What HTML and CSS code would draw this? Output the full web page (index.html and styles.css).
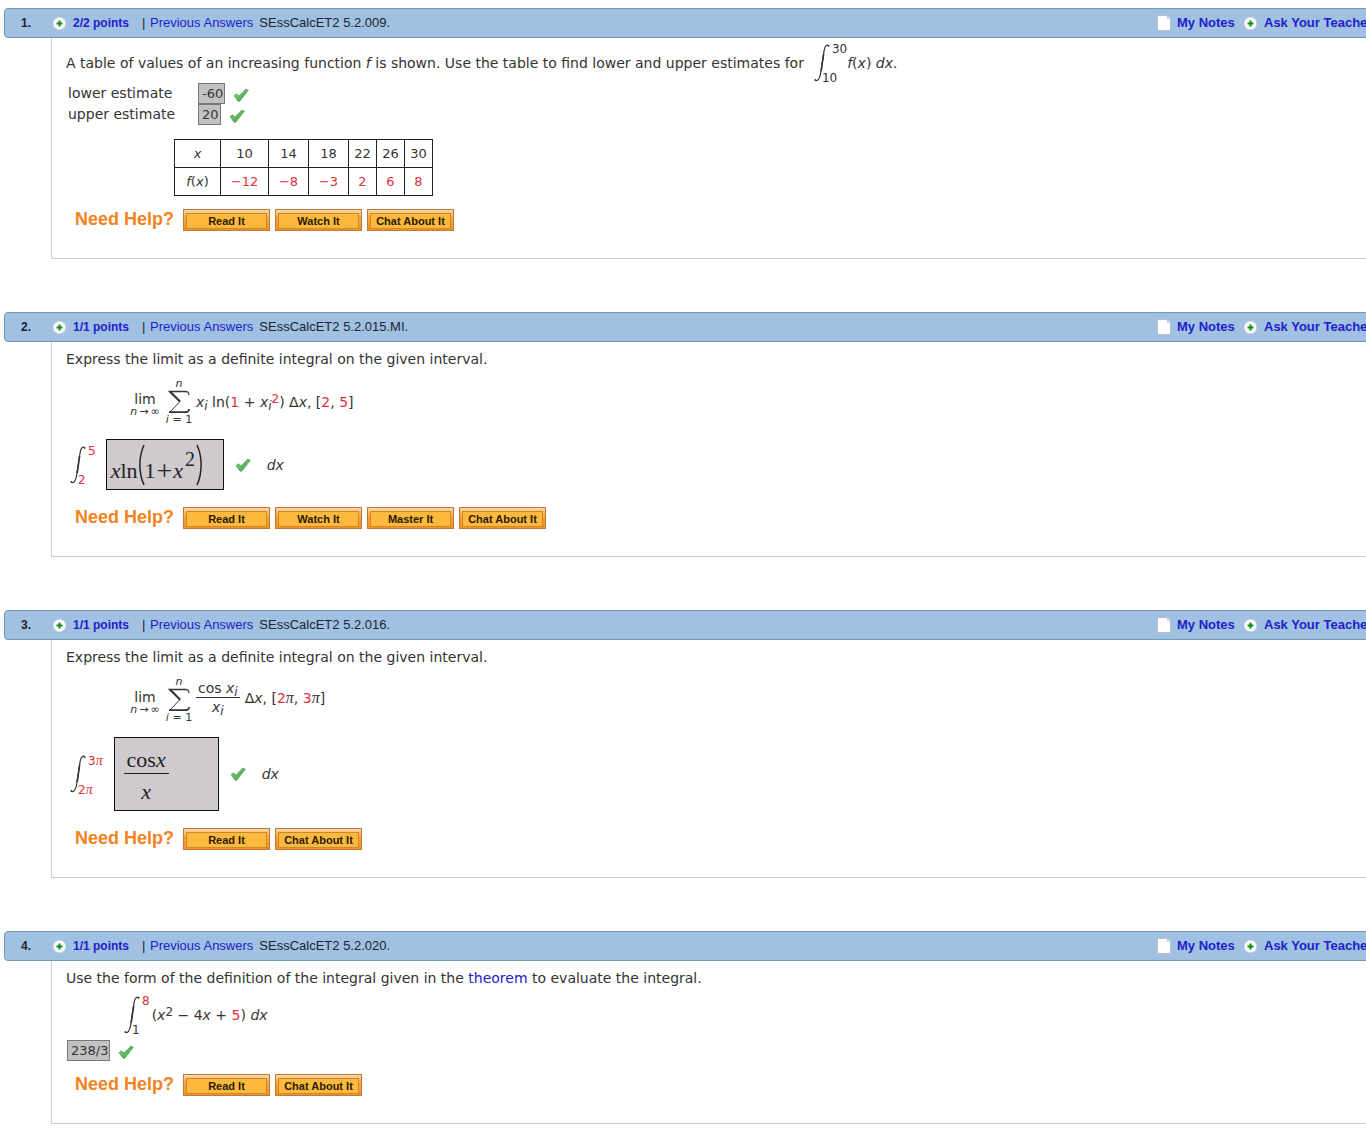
FILE: index.html
```html
<!DOCTYPE html>
<html lang="en">
<head>
<meta charset="utf-8">
<title>Assignment 5.2</title>
<link rel="stylesheet" href="styles.css">
</head>
<body>
<svg class="defs" width="0" height="0" aria-hidden="true">
  <defs>
    <linearGradient id="leaf" x1="0" y1="0" x2="1" y2="1">
      <stop offset="0" stop-color="#8fd08a"/>
      <stop offset="1" stop-color="#3f9a45"/>
    </linearGradient>
    <symbol id="tick" viewBox="0 0 16 14"><path d="M1 7.600 3.500 5.800 6 8 12.800 1 15.400 2.200 6.800 13.200 5 13.200Z" fill="url(#leaf)" stroke="#4ea552" stroke-width=".7" stroke-linejoin="round"/></symbol>
    <symbol id="plus" viewBox="0 0 13 13"><circle cx="6.500" cy="6.500" r="6.200" fill="#fdfefd" stroke="#c9d6dd" stroke-width=".6"/><path d="M6.500 3.500v6M3.500 6.500h6" stroke="#128a1c" stroke-width="2"/></symbol>
    <symbol id="note" viewBox="0 0 14 16"><path d="M.5.500h10l3 3v12H.5Z" fill="#fff" stroke="#b4bfd0"/><path d="M10.500.500v3h3" fill="#e8ebf0" stroke="#c3cad6"/></symbol>
    <symbol id="int" viewBox="0 0 16 38"><path d="M15 1.700C12.500.300 11 2 10.200 6L6.500 30C5.600 35 4 37.500 1 36.300" fill="none" stroke="#333" stroke-width="1.200"/><path d="M9.600 10 7.200 27" stroke="#333" stroke-width="1.600"/><circle cx="14.600" cy="1.900" r=".9" fill="#333"/><circle cx="1.400" cy="36" r=".9" fill="#333"/></symbol>
    <symbol id="sum" viewBox="0 0 22 24"><path d="M21 5C20.500 2 20 1.500 17 1.500H1.500L12 11.500" fill="none" stroke="#333" stroke-width="1.300"/><path d="M12 11.500 1.500 22.500" fill="none" stroke="#333" stroke-width="1"/><path d="M2 1.500 12 11.500" stroke="#333" stroke-width="2"/><path d="M1 22.200H17.500C20 22.200 20.500 21.500 21.300 19" fill="none" stroke="#333" stroke-width="1.800"/></symbol>
    <symbol id="paren" viewBox="0 0 7 42"><path d="M6 1C.5 13 .5 29 6 41" fill="none" stroke="#222" stroke-width="1.500"/></symbol>
    <symbol id="paren-close" viewBox="0 0 7 42"><path d="M1 1C6.500 13 6.500 29 1 41" fill="none" stroke="#222" stroke-width="1.500"/></symbol>
  </defs>
</svg>
<main class="page">

<section class="question">
  <header class="bar">
    <span class="number">1.</span>
    <svg class="plus"><use href="#plus"/></svg>
    <a class="points" href="#">2/2 points</a>
    <span class="divider">|</span>
    <a class="previous" href="#">Previous Answers</a>
    <span class="source">SEssCalcET2 5.2.009.</span>
    <a class="notes" href="#"><svg class="note"><use href="#note"/></svg>My Notes</a>
    <a class="ask" href="#"><svg class="plus"><use href="#plus"/></svg>Ask Your Teacher</a>
  </header>
  <div class="body">
    <div class="line">
      <p>A table of values of an increasing function <i>f</i> is shown. Use the table to find lower and upper estimates for</p>
      <span class="integral lead"><svg><use href="#int"/></svg><span class="bounds"><span>30</span><span class="low">10</span></span></span>
      <span class="after"><i>f</i>(<i>x</i>) <i>dx</i>.</span>
    </div>
    <dl class="estimates">
      <dt>lower estimate</dt><dd><span class="answer">-60</span><svg class="tick"><use href="#tick"/></svg></dd>
      <dt>upper estimate</dt><dd><span class="answer">20</span><svg class="tick"><use href="#tick"/></svg></dd>
    </dl>
    <table class="values">
      <colgroup><col class="w-head"><col class="w-wide"><col class="w-mid"><col class="w-mid"><col class="w-slim"><col class="w-slim"><col class="w-slim"></colgroup>
      <tr><th scope="row"><i>x</i></th><td>10</td><td>14</td><td>18</td><td>22</td><td>26</td><td>30</td></tr>
      <tr class="red"><th scope="row"><i>f</i>(<i>x</i>)</th><td>−12</td><td>−8</td><td>−3</td><td>2</td><td>6</td><td>8</td></tr>
    </table>
    <div class="help near">
      <span class="help-label">Need Help?</span>
      <button type="button"><span>Read It</span></button>
      <button type="button"><span>Watch It</span></button>
      <button type="button"><span>Chat About It</span></button>
    </div>
  </div>
</section>

<section class="question">
  <header class="bar">
    <span class="number">2.</span>
    <svg class="plus"><use href="#plus"/></svg>
    <a class="points" href="#">1/1 points</a>
    <span class="divider">|</span>
    <a class="previous" href="#">Previous Answers</a>
    <span class="source">SEssCalcET2 5.2.015.MI.</span>
    <a class="notes" href="#"><svg class="note"><use href="#note"/></svg>My Notes</a>
    <a class="ask" href="#"><svg class="plus"><use href="#plus"/></svg>Ask Your Teacher</a>
  </header>
  <div class="body">
    <p>Express the limit as a definite integral on the given interval.</p>
    <div class="limit">
      <span class="lim"><span>lim</span><small><i>n</i><span>→</span>∞</small></span>
      <span class="sum"><small><i>n</i></small><svg><use href="#sum"/></svg><small><i>i</i> = 1</small></span>
      <span class="term"><i>x</i><sub><i>i</i></sub> ln(<b>1</b> + <i>x</i><sub><i>i</i></sub><sup><b>2</b></sup>) Δ<i>x</i>, [<b>2</b>, <b>5</b>]</span>
    </div>
    <div class="entry">
      <span class="integral red"><svg><use href="#int"/></svg><span class="bounds"><span>5</span><span class="low">2</span></span></span>
      <span class="mathbox log"><i>x</i>ln<svg class="paren"><use href="#paren"/></svg>1<span class="add">+</span><i>x</i><sup>2</sup><svg class="paren"><use href="#paren-close"/></svg></span>
      <svg class="tick"><use href="#tick"/></svg>
      <i class="dx">dx</i>
    </div>
    <div class="help">
      <span class="help-label">Need Help?</span>
      <button type="button"><span>Read It</span></button>
      <button type="button"><span>Watch It</span></button>
      <button type="button"><span>Master It</span></button>
      <button type="button"><span>Chat About It</span></button>
    </div>
  </div>
</section>

<section class="question">
  <header class="bar">
    <span class="number">3.</span>
    <svg class="plus"><use href="#plus"/></svg>
    <a class="points" href="#">1/1 points</a>
    <span class="divider">|</span>
    <a class="previous" href="#">Previous Answers</a>
    <span class="source">SEssCalcET2 5.2.016.</span>
    <a class="notes" href="#"><svg class="note"><use href="#note"/></svg>My Notes</a>
    <a class="ask" href="#"><svg class="plus"><use href="#plus"/></svg>Ask Your Teacher</a>
  </header>
  <div class="body">
    <p>Express the limit as a definite integral on the given interval.</p>
    <div class="limit">
      <span class="lim"><span>lim</span><small><i>n</i><span>→</span>∞</small></span>
      <span class="sum"><small><i>n</i></small><svg><use href="#sum"/></svg><small><i>i</i> = 1</small></span>
      <span class="quotient">
        <span class="fraction"><span class="over">cos <i>x</i><sub><i>i</i></sub></span><span><i>x</i><sub><i>i</i></sub></span></span>
        <span class="term">Δ<i>x</i>, [<b>2</b><i class="pi">π</i>, <b>3</b><i class="pi">π</i>]</span>
      </span>
    </div>
    <div class="entry">
      <span class="integral red"><svg><use href="#int"/></svg><span class="bounds"><span>3<i class="pi">π</i></span><span class="low">2<i class="pi">π</i></span></span></span>
      <span class="mathbox ratio"><span class="over">cos<i>x</i></span><i>x</i></span>
      <svg class="tick"><use href="#tick"/></svg>
      <i class="dx">dx</i>
    </div>
    <div class="help">
      <span class="help-label">Need Help?</span>
      <button type="button"><span>Read It</span></button>
      <button type="button"><span>Chat About It</span></button>
    </div>
  </div>
</section>

<section class="question">
  <header class="bar">
    <span class="number">4.</span>
    <svg class="plus"><use href="#plus"/></svg>
    <a class="points" href="#">1/1 points</a>
    <span class="divider">|</span>
    <a class="previous" href="#">Previous Answers</a>
    <span class="source">SEssCalcET2 5.2.020.</span>
    <a class="notes" href="#"><svg class="note"><use href="#note"/></svg>My Notes</a>
    <a class="ask" href="#"><svg class="plus"><use href="#plus"/></svg>Ask Your Teacher</a>
  </header>
  <div class="body">
    <p>Use the form of the definition of the integral given in the <a href="#">theorem</a> to evaluate the integral.</p>
    <div class="line inset">
      <span class="integral"><svg><use href="#int"/></svg><span class="bounds"><b>8</b><span class="low">1</span></span></span>
      <span class="term">(<i>x</i><sup>2</sup> − 4<i>x</i> + <b>5</b>) <i>dx</i></span>
    </div>
    <div class="single"><span class="answer">238/3</span><svg class="tick"><use href="#tick"/></svg></div>
    <div class="help near">
      <span class="help-label">Need Help?</span>
      <button type="button"><span>Read It</span></button>
      <button type="button"><span>Chat About It</span></button>
    </div>
  </div>
</section>

</main>
</body>
</html>
```
FILE: styles.css
```css
body {
  margin: 0;
  background: #fff;
  color: #333;
  font: 14px/20px "DejaVu Sans", Verdana, sans-serif;
  overflow-x: hidden;
}
.defs { display: block; }
.page { margin: 8px -20px 8px 4px; }
a { color: #2020cc; text-decoration: none; }
b { font-weight: normal; color: #e0303a; }
p { margin: 0; line-height: 26px; }
small { font-size: 11px; line-height: 12px; }
sub, sup { font-size: 12px; line-height: 0; }
sub { vertical-align: -3px; }
sup { vertical-align: 4px; }

.question { margin-bottom: 53px; }

/* Title bar */
.bar {
  display: flex;
  align-items: center;
  box-sizing: border-box;
  height: 30px;
  padding: 0 11px 0 16px;
  border: 1px solid #6f9ab5;
  border-radius: 4px;
  background: #a0c1e1;
  color: #1c2430;
  font: 13px/20px "Liberation Sans", Arial, sans-serif;
}
.plus { width: 13px; height: 13px; }
.number { width: 32px; font-size: 12px; font-weight: bold; }
.points { margin-left: 7px; width: 69px; font-size: 12px; font-weight: bold; }
.divider { width: 8px; }
.source { margin-left: 6px; }
.notes, .ask { display: flex; align-items: center; font-weight: bold; }
.notes { margin-left: auto; gap: 6px; width: 87px; white-space: nowrap; }
.note { width: 14px; height: 16px; }
.ask { gap: 7px; width: 130px; white-space: nowrap; }

/* Question body */
.body {
  margin-left: 47px;
  padding: 4px 14px 27px;
  border: solid #ccc;
  border-width: 0 0 1px 1px;
}
.line { display: flex; align-items: center; height: 41px; white-space: pre; }
.inset { margin-top: 3px; padding-left: 58px; }
.inset .term { margin-left: 2px; }
.integral { display: flex; height: 41px; align-items: center; font-size: 12px; }
.integral svg { width: 16px; height: 38px; }
.lead { margin-left: 10px; }
.bounds {
  display: flex;
  flex-direction: column;
  justify-content: space-between;
  box-sizing: border-box;
  height: 41px;
  padding: 2px 0 0 2px;
  line-height: 10px;
}
.low { margin-left: -10px; }
.red .bounds, .red td { color: #e0303a; }

.estimates {
  display: grid;
  grid-template-columns: 130px 1fr;
  grid-auto-rows: 21px;
  margin: 0;
  padding-left: 2px;
}
.estimates dd { margin: 0; display: flex; align-items: center; }
.answer {
  box-sizing: border-box;
  height: 21px;
  padding: 0 1px 0 3px;
  border: 1px solid #777;
  background: #c2c1c3;
  font-size: 13px;
  line-height: 19px;
}
.tick { width: 16px; height: 14px; margin: 3px 0 0 8px; }
.single { display: flex; align-items: center; margin-top: 5px; padding-left: 1px; }

.values { margin: 14px 0 0 108px; border-collapse: collapse; table-layout: fixed; width: 258px; font-size: 13px; }
.values th, .values td {
  height: 27px;
  padding: 0;
  border: 1px solid #222;
  font-weight: normal;
  text-align: center;
}
.w-head { width: 46px; }
.w-wide { width: 48px; }
.w-mid { width: 40px; }
.w-slim { width: 28px; }

/* Limits, sums and fractions */
.limit { display: flex; align-items: center; height: 48px; margin-top: 6px; padding-left: 63px; }
.lim, .sum, .fraction { display: flex; flex-direction: column; align-items: center; }
.lim { width: 32px; padding-top: 6px; line-height: 14px; white-space: nowrap; }
.lim small span { margin: 0 2px; }
.sum { width: 30px; margin: 0 2px 0 3px; white-space: nowrap; }
.sum svg { width: 22px; height: 24px; }
.term { white-space: nowrap; }
.quotient { display: flex; align-items: center; gap: 5px; padding-bottom: 5px; }
.fraction { line-height: 18px; }
.fraction .over { padding: 0 2px; border-bottom: 1px solid #333; }
.pi { font-family: "Liberation Serif", serif; font-size: 16px; line-height: 0; }
.bounds .pi { font-size: 14px; }

/* Answer entry with an integral in front */
.entry { display: flex; align-items: center; margin-top: 13px; padding-left: 4px; }
.mathbox {
  display: flex;
  box-sizing: border-box;
  border: 1px solid #111;
  background: #cecace;
  color: #222;
  font: 22px/24px "Liberation Serif", serif;
}
.log { align-items: center; width: 118px; height: 51px; margin-left: 10px; padding: 12px 4px 0; }
.log sup { font-size: 20px; margin: -24px 1px 0 2px; }
.add { margin: 0 1px; font-size: 28px; }
.paren { width: 7px; height: 42px; margin-top: -12px; }
.ratio {
  flex-direction: column;
  align-items: center;
  width: 105px;
  height: 74px;
  margin-left: 11px;
  padding: 10px 48px 0 8px;
}
.ratio .over { padding: 0 3px 1px; margin-bottom: 6px; border-bottom: 1px solid #222; }
.entry .tick { margin: 0 0 0 11px; }
.dx { margin-left: 16px; }

/* Help buttons */
.help { display: flex; gap: 5px; height: 22px; margin-top: 17px; padding-left: 9px; }
.near { margin-top: 13px; }
.help-label {
  width: 103px;
  color: #f58220;
  font: bold 18px/20px "Liberation Sans", Arial, sans-serif;
  white-space: nowrap;
}
.help button {
  box-sizing: border-box;
  width: 87px;
  padding: 3px 2px;
  border: 1px solid #c07a35;
  background: linear-gradient(#fdd9a8, #fba33a 40%, #f98f25);
  color: #2a1a00;
  font: bold 11px/14px "Liberation Sans", Arial, sans-serif;
}
.help button span {
  display: block;
  border: 1px solid #c98a2c;
  background: #fdb93e;
  white-space: nowrap;
}
```
